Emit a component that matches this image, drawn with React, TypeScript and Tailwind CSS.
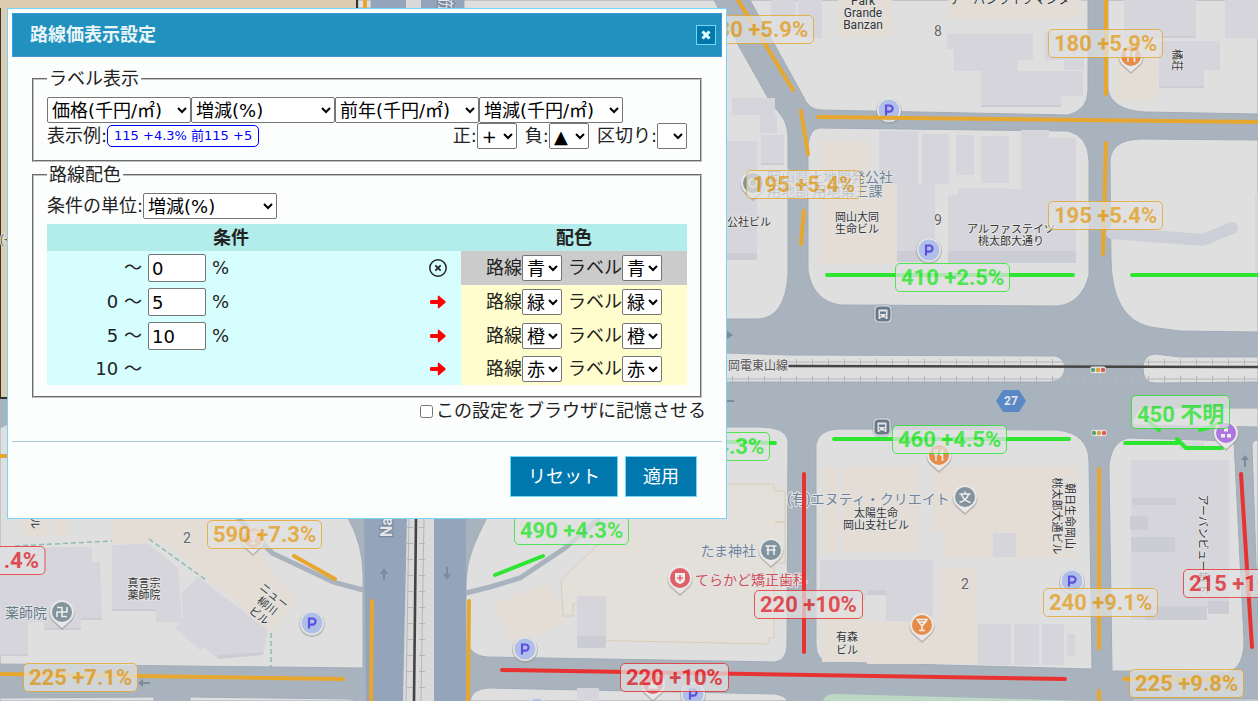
import React from "react";

const ORANGE = "#e7a72e";
const GREEN = "#2ee632";
const RED = "#e83232";
const LAND = "#dfdfdf";
const BUILDING = "#d5d5db";
const SHOP = "#e3ddd6";

const landBlocks = [
  "M358 0H371V8H358Z",
  "M464 0H714L727 25L768 98L783 118Q788 126 788 140V275Q785 318 758 319H466Z",
  "M750 0L803 96Q808 109 820 110L1068 115Q1088 110 1088 90V0Z",
  "M1108 0V90Q1112 110 1145 112L1258 114V0Z",
  "M808 145Q810 128 820 128L1068 131Q1088 136 1089 160V275Q1082 303 1058 306L840 305Q812 300 808 270Z",
  "M1110 160Q1112 140 1140 139L1258 140V332L1180 331L1150 327Q1112 318 1111 260Z",
  "M600 352L727 353L790 355L1055 356Q1064 358 1065 368Q1064 381 1050 382H600Z",
  "M1258 357H1180L1155 354Q1143 355 1143 368Q1143 383 1155 383L1258 382Z",
  "M0 428L8 424H300L348 518Q363 545 363 575V668L0 664Z",
  "M487 518C470 550 466 565 466 590V640Q470 656 487 657L775 662Q787 660 787 645L788 440Q785 427 760 427H500Z",
  "M470 701Q472 689 488 688L775 694Q786 696 787 701Z",
  "M0 698L154 697V701H0ZM190 697L350 699L358 701H190Z",
  "M816 445Q818 430 838 429L1058 430Q1089 434 1089 462L1092 669L830 662Q816 660 816 645Z",
  "M1109 465Q1112 440 1130 438L1234 441L1244 640Q1244 668 1228 672L1112 671Z",
  "M1252 446Q1252 440 1258 440V620Z",
  "M1132 422L1140 408H1258V427L1135 425Z",
  "M1133 699H1258V701H1133Z",
];

const shops = [
  "M838 0H892V37H838Z",
  "M948 0H1081V18H948Z",
  "M1117 38H1156V101H1117Z",
  "M819 141H869V183H897V263H819Z",
  "M822 468H838V554H822ZM842 466H918V553H842Z",
  "M932 466H1076V558H945V532H932Z",
  "M867 622H940V569H977V664H867ZM822 600H866V662H822Z",
  "M22 518H47V537H22ZM52 518H67V536H52ZM112 518H148V544H112Z",
  "M148 518H245L270 567L295 600L272 632L240 605L205 577L165 543L148 540Z",
  "M494 603L550 582L565 623L512 646Z",
];

const buildings = [
  "M771 0H796V35H771ZM798 0H822V38H798Z",
  "M732 98H775V115H732ZM760 115H777V133H760ZM761 135H784V165H761ZM727 141H757V260H727Z",
  "M879 131H918V184H879ZM922 134H949V184H922ZM956 135H974V175H956ZM981 136H1009V183H981Z",
  "M897 184H935V262H897ZM948 195H958V188H1009V189H1021V130H1049V138H1076V263H948Z",
  "M947 34H1033V60H1018V71H1083V96H1061V107H981V71H954V49H947Z",
  "M1045 32H1084V70H1064V60H1045Z",
  "M1124 0H1196V38H1124ZM1225 0H1258V38H1225ZM1159 41H1220V70H1204V88H1159Z",
  "M1255 195H1258V272H1255Z",
  "M820 560H933V621H886V595H866V600H820Z",
  "M993 533H1016V557H993ZM978 624H1011V665H978ZM1014 624H1039V665H1014ZM1042 624H1064V665H1042ZM1067 634H1075V656H1067Z",
  "M1131 460H1229V608H1207V620H1131ZM1180 442H1204V450H1180Z",
  "M577 596H606V648H577ZM577 688H599V701H577Z",
  "M0 548L92 547V562H100L102 620H81V630H44V622H28V656H0Z",
  "M112 545L149 544L178 568L182 622H156V611H112Z",
  "M182 593L198 577L268 630L263 655L218 659L203 647L200 650L175 628L183 617Z",
];

const shades = [
  "M727 253H757V260H727ZM897 251H935V262H897ZM948 251H1076V263H948Z",
  "M1132 498H1176V505H1132ZM1130 516H1148V530H1130ZM1131 537H1175V552H1131ZM1145 606H1207V620H1145ZM1208 601H1229V614H1208Z",
  "M577 636H606V648H577ZM867 590H886V595H867Z",
  "M112 609H156V611H112ZM81 618H102V620H81ZM44 628H81V630H44ZM0 654H28V656H0ZM218 655L264 652L263 655L218 659Z",
  "M1159 86H1204V88H1159ZM981 105H1061V107H981ZM1124 36H1195V38H1124ZM761 163H784V165H761Z",
];

const priceLines: [string, string][] = [
  [ORANGE, "M738 0L793 90M801 111L808 154M818 117L1258 122M804 211L801 244M1106 0V94M1106 143L1103 254"],
  [ORANGE, "M365 0V10M0 456H12M0 674L343 679M294 556L335 579M372 601L371 701M469 601L468 701"],
  [ORANGE, "M1099 469V648M1124 679L1235 680M1099 691V701"],
  [GREEN, "M827 275H1073M1132 275H1258M834 439H1069M700 441L775 443M495 575L543 556"],
  [GREEN, "M1125 443H1178L1177 439L1186 448H1222M1148 421L1159 430M1200 430L1216 425"],
  [RED, "M804 474V652M502 670L1065 679M1241 474L1252 647"],
];

interface PriceLabelData {
  x: number;
  y: number;
  text: string;
  tone: "orange" | "green" | "red";
  end?: boolean;
}

const priceLabels: PriceLabelData[] = [
  { x: 699, y: 15, text: "180 +5.9%", tone: "orange" },
  { x: 1048, y: 29, text: "180 +5.9%", tone: "orange" },
  { x: 746, y: 170, text: "195 +5.4%", tone: "orange" },
  { x: 1048, y: 201, text: "195 +5.4%", tone: "orange" },
  { x: 895, y: 263, text: "410 +2.5%", tone: "green" },
  { x: 892, y: 425, text: "460 +4.5%", tone: "green" },
  { x: 655, y: 432, text: "490 +4.3%", tone: "green" },
  { x: 514, y: 516, text: "490 +4.3%", tone: "green" },
  { x: 207, y: 520, text: "590 +7.3%", tone: "orange" },
  { x: 45, y: 546, text: "+11.4%", tone: "red", end: true },
  { x: 754, y: 590, text: "220 +10%", tone: "red" },
  { x: 620, y: 663, text: "220 +10%", tone: "red" },
  { x: 1043, y: 588, text: "240 +9.1%", tone: "orange" },
  { x: 23, y: 663, text: "225 +7.1%", tone: "orange" },
  { x: 1129, y: 669, text: "225 +9.8%", tone: "orange" },
  { x: 1183, y: 569, text: "215 +10%", tone: "red" },
  { x: 1131, y: 395, text: "450 不明", tone: "green" },
];

const toneClass = {
  orange: "border-[#e7a72e] text-[#e3a228]",
  green: "border-[#2ee632] text-[#2ee632]",
  red: "border-[#e83232] text-[#e02c32]",
};

function PriceLabel({ x, y, text, tone, end }: PriceLabelData) {
  const tall = text.includes("不明");
  return (
    <span
      className={`absolute rounded-[5px] border bg-[#e2e2e2]/90 px-[5px] font-[Roboto,'Noto_Sans_CJK_JP',sans-serif] text-[22px] leading-[27px] font-bold whitespace-nowrap opacity-80 ${tall ? "pt-[5px]" : ""} ${toneClass[tone]}`}
      style={{ left: x, top: y, transform: end ? "translateX(-100%)" : undefined }}
    >
      {text}
    </span>
  );
}

function MapText({
  x,
  y,
  children,
  size = 12,
  fill = "#333",
  rotate,
  anchor = "middle",
}: {
  x: number;
  y: number;
  children: string;
  size?: number;
  fill?: string;
  rotate?: number;
  anchor?: "start" | "middle" | "end";
}) {
  return (
    <text
      x={x}
      y={y}
      fontSize={size}
      fill={fill}
      textAnchor={anchor}
      dominantBaseline="central"
      stroke="#e4e4e4"
      strokeWidth="2"
      strokeLinejoin="round"
      paintOrder="stroke"
      transform={rotate ? `rotate(${rotate} ${x} ${y})` : undefined}
    >
      {children}
    </text>
  );
}

function Parking({ x, y }: { x: number; y: number }) {
  return (
    <g>
      <circle cx={x} cy={y + 1} r="13" fill="#999" opacity="0.5" />
      <circle cx={x} cy={y} r="12" fill="#e6e6e6" />
      <circle cx={x} cy={y} r="10.5" fill="#b0bfe8" />
      <path d={`M${x - 3} ${y + 5.5}V${y - 4.5}H${x + 0.5}A3 3 0 0 1 ${x + 0.5} ${y + 1.7}H${x - 2}`} fill="none" stroke="#5d50e0" strokeWidth="2.2" />
    </g>
  );
}

function Pin({ x, y, color, children }: { x: number; y: number; color: string; children?: React.ReactNode }) {
  return (
    <g transform={`translate(${x} ${y})`}>
      <path d="M0 17L-9 9A12.5 12.5 0 1 1 9 9Z" fill="#8b8b8b" opacity="0.5" transform="translate(0 1)" />
      <path d="M0 16L-8.500 8.500A12 12 0 1 1 8.500 8.500Z" fill="#e8e8e8" />
      <circle r="10" fill={color} />
      <g fill="none" stroke="#eee" strokeWidth="1.6">{children}</g>
    </g>
  );
}

function Bus({ x, y }: { x: number; y: number }) {
  return (
    <g transform={`translate(${x} ${y})`}>
      <rect x="-9" y="-9" width="18" height="18" rx="5" fill="#e4e4e4" stroke="#8c959f" strokeWidth="0.6" />
      <rect x="-7.500" y="-7.500" width="15" height="15" rx="4" fill="#66788a" />
      <path d="M-4.500 -4.500H4.500V5H2.500V3.500H-2.500V5H-4.500Z" fill="#e6e6e6" />
      <path d="M-3 -2.500H3V0H-3Z" fill="#66788a" />
      <circle cx="-2.500" cy="1.800" r="0.800" fill="#66788a" />
      <circle cx="2.500" cy="1.800" r="0.800" fill="#66788a" />
    </g>
  );
}

function Signal({ x, y }: { x: number; y: number }) {
  return (
    <g>
      <rect x={x - 8} y={y - 3.5} width="16" height="7" rx="2.500" fill="#e6e6e6" stroke="#a8a8a8" strokeWidth="0.5" />
      <circle cx={x - 5} cy={y} r="2.200" fill="#58a377" />
      <circle cx={x} cy={y} r="2.200" fill="#e0a23a" />
      <circle cx={x + 5} cy={y} r="2.200" fill="#dc5a55" />
    </g>
  );
}

function Fork() {
  return (
    <>
      <path d="M-4.500 -5.500V-1.500Q-4.500 0 -3 0Q-1.500 0 -1.500 -1.500V-5.500M-3 -5.500V6" strokeWidth="1.3" />
      <path d="M3.500 6V-5Q1.500 -4 1.500 0H3.500" fill="#eee" />
    </>
  );
}

function Cocktail() {
  return (
    <>
      <path d="M-5 -5.500H5L1 0H-1Z" strokeWidth="1.4" />
      <path d="M-3.500 -3H3.500L0 0.500V5.500M-3 5.500H3" />
    </>
  );
}

function CityMap() {
  return (
    <svg
      className="absolute top-0 left-0 font-[Roboto,'Noto_Sans_CJK_JP',sans-serif]"
      width="1258"
      height="701"
      viewBox="0 0 1258 701"
      aria-label="地図"
    >
      <rect width="1258" height="701" fill="#a9b3be" />
      <g fill={LAND} stroke="#a2adb9" strokeWidth="1">
        {landBlocks.map((d) => <path key={d} d={d} />)}
      </g>
      <path d="M823 701Q825 694 835 694L1088 701Z" fill="#bcd8c5" />
      <path d="M371 0H406V8H371ZM421 0H464V8H421ZM364 518H407L403 701H366ZM434 518H466V701H434Z" fill="#94a5bb" />
      <path d="M406 0H421V8H406ZM407 518H434V701H403Z" fill="#dadada" />
      <path d="M357 0H0V398H357Z" fill="#ddcdb0" stroke="#333" strokeWidth="2" />
      <path d="M0 0H356V8H0Z" fill="#ddcdb0" />
      <path d="M630 515L564 577L561 581L563 616H573V604H578V640L769 644V638H774V563H785V522H775V522H785V491H774V484H720Z" fill="#e3e0d9" stroke="#d9cdb4" strokeWidth="1" />
      {shops.map((d) => <path key={d} d={d} fill={SHOP} />)}
      {buildings.map((d) => <path key={d} d={d} fill={BUILDING} />)}
      {shades.map((d) => <path key={d} d={d} fill="#cccdd4" />)}
      <path d="M1112 233L1203 240L1232 228" fill="none" stroke="#cdcfd8" strokeWidth="12" strokeLinecap="round" strokeLinejoin="round" />
      <path d="M238 518L272 553L333 582L363 590M466 593L490 587L520 578L565 548L600 518" fill="none" stroke="#a9b3be" strokeWidth="5" />
      <path d="M15 546L112 541M149 539L206 580M271 633V668" fill="none" stroke="#8fbcae" strokeWidth="1.500" strokeDasharray="5 3" />

      <path d="M600 362H1258M600 379H1258" stroke="#b4b6b9" strokeWidth="1" />
      <path d="M604 362H1258M604 379H1258" stroke="#b4b6b9" strokeWidth="6" strokeDasharray="1 15" />
      <path d="M409 518L406 701M424 518L421 701" stroke="#b4b6b9" strokeWidth="1" />
      <path d="M410 527V701M422 527V701" stroke="#b4b6b9" strokeWidth="6" strokeDasharray="1 15" />
      <path d="M788 366L1258 367M416 518L414 701" stroke="#444" strokeWidth="2.600" />
      <path d="M384 580V571M447 567V577M150 683H140M734 401H727M1245 467V457" stroke="#7e8b98" strokeWidth="2" />
      <path d="M380 574L384 568L388 574ZM443 574L447 580L451 574ZM143 679L138 683L143 687ZM727 331L733 335L727 339ZM1241 460L1245 455L1249 460Z" fill="#7e8b98" />

      <MapText x={863} y={1}>Park</MapText>
      <MapText x={863} y={13}>Grande</MapText>
      <MapText x={863} y={25}>Banzan</MapText>
      <MapText x={1010} y={0}>アーバンライフマンタ</MapText>
      <MapText x={938} y={31} size={14} fill="#666">8</MapText>
      <MapText x={938} y={220} size={14} fill="#666">9</MapText>
      <MapText x={965} y={584} size={14} fill="#666">2</MapText>
      <MapText x={187} y={538} size={14} fill="#666">2</MapText>
      <MapText x={857} y={217} size={11}>岡山大同</MapText>
      <MapText x={857} y={229} size={11}>生命ビル</MapText>
      <MapText x={1011} y={229} size={11}>アルファステイツ</MapText>
      <MapText x={1011} y={241} size={11}>桃太郎大通り</MapText>
      <MapText x={771} y={222} size={11} anchor="end">公社ビル</MapText>
      <MapText x={767} y={177} size={14} fill="#71849a" anchor="start">岡山県土地開発公社</MapText>
      <MapText x={767} y={191} size={14} fill="#71849a" anchor="start">用地部 用地第三課</MapText>
      <MapText x={728} y={366} fill="#555" anchor="start">岡電東山線</MapText>
      <MapText x={787} y={499} size={14} fill="#71849a" anchor="start">(有)エヌティ・クリエイト</MapText>
      <MapText x={876} y={513} size={11}>太陽生命</MapText>
      <MapText x={876} y={525} size={11}>岡山支社ビル</MapText>
      <MapText x={847} y={637} size={11}>有森</MapText>
      <MapText x={847} y={650} size={11}>ビル</MapText>
      <MapText x={756} y={551} size={14} fill="#71849a" anchor="end">たま神社</MapText>
      <MapText x={695} y={580} size={14} fill="#d0505c" anchor="start">てらかど矯正歯科</MapText>
      <MapText x={144} y={583} size={11}>真言宗</MapText>
      <MapText x={144} y={595} size={11}>薬師院</MapText>
      <MapText x={5} y={613} size={14} fill="#66798c" anchor="start">薬師院</MapText>
      <MapText x={274} y={596} size={11} rotate={38}>ニュー</MapText>
      <MapText x={267} y={606} size={11} rotate={38}>柳川</MapText>
      <MapText x={259} y={616} size={11} rotate={38}>ビル</MapText>
      <MapText x={34} y={518} size={11} rotate={90}>ビル</MapText>
      <MapText x={1069} y={516} size={11} rotate={90}>朝日生命岡山</MapText>
      <MapText x={1056} y={516} size={11} rotate={90}>桃太郎大通ビル</MapText>
      <MapText x={1202} y={544} size={11} rotate={90}>アーバンビュー城下</MapText>
      <MapText x={1176} y={60} size={11} rotate={90}>橘荘</MapText>
      <MapText x={0} y={240} fill="#885a2c" anchor="start">(+</MapText>
      <text x="386" y="537" fontSize="16" fill="#e6e6e6" stroke="#7888a4" strokeWidth="2.500" paintOrder="stroke" fontWeight="700" transform="rotate(-90 386 537)" dominantBaseline="central">Nakasando</text>
      <text x="445" y="10" fontSize="16" fill="#e6e6e6" stroke="#7888a4" strokeWidth="2.500" paintOrder="stroke" transform="rotate(90 445 10)" textAnchor="end" dominantBaseline="central">筋</text>

      <path d="M996 401L1003 390H1019L1026 401L1019 412H1003Z" fill="#5988c4" />
      <text x="1011" y="401" fontSize="12" fontWeight="700" fill="#e4e8ef" textAnchor="middle" dominantBaseline="central">27</text>

      <Parking x={889} y={110} />
      <Parking x={929} y={250} />
      <Parking x={312} y={623} />
      <Parking x={525} y={649} />
      <Parking x={693} y={694} />
      <Parking x={537} y={709} />
      <Parking x={1072} y={581} />
      <Bus x={883} y={314} />
      <Bus x={882} y={427} />
      <Signal x={1098} y={370} />
      <Signal x={1099} y={433} />

      <Pin x={1131} y={56} color="#e78b48"><Fork /></Pin>
      <Pin x={939} y={455} color="#e78b48"><Fork /></Pin>
      <Pin x={922} y={625} color="#e78b48"><Cocktail /></Pin>
      <Pin x={253} y={538} color="#e9a06e"><Cocktail /></Pin>
      <Pin x={965} y={497} color="#82939d">
        <path d="M-5.500 -3H5.500M0 -5.500V-3M-3.500 -2.500Q-1 4 5.500 5.500M3.500 -2.500Q1 4 -5.500 5.500" />
      </Pin>
      <Pin x={771} y={550} color="#82939d">
        <path d="M-5.500 -4H5.500M-4.500 0H4.500M-3 -4V5M3 -4V5" />
      </Pin>
      <Pin x={62} y={612} color="#82939d">
        <path d="M-5 -4.500H0V4.500H5M5 -5V0H-5V5" />
      </Pin>
      <Pin x={753} y={183} color="#82939d"><circle r="4" /></Pin>
      <Pin x={680} y={578} color="#e0606a">
        <path d="M-5 -5H5V1Q5 4.500 0 6Q-5 4.500 -5 1Z" fill="#eee" stroke="none" />
        <path d="M0 -3V3M-3 0H3" stroke="#e0606a" />
      </Pin>
      <Pin x={653} y={684} color="#e0606a"><path d="M0 -4L4 4H-4Z" fill="#eee" /></Pin>

      {priceLines.map(([color, d]) => (
        <path key={d} d={d} fill="none" stroke={color} strokeWidth="4" strokeLinecap="round" strokeLinejoin="round" />
      ))}

      <Pin x={1226} y={433} color="#af76e2">
        <path d="M-2 -5H2V-1.500H-2ZM-5 1H-1V4.500H-5ZM1 1H5V4.500H1Z" fill="#eee" stroke="none" />
      </Pin>
    </svg>
  );
}

const selectClass = "h-[26px] rounded-[2px] border border-[#767676] bg-white text-black";
const fieldsetClass = "min-w-0 border-2 border-[#c0c0c0] px-[13px] pt-[5px] pb-[11px] [border-style:groove]";

function Picker({ label, value, options, width }: { label: string; value: string; options: string[]; width: string }) {
  return (
    <select aria-label={label} defaultValue={value} className={`${selectClass} ${width}`}>
      {options.map((o) => <option key={o}>{o}</option>)}
    </select>
  );
}

const units = ["価格(千円/㎡)", "増減(%)", "前年(千円/㎡)", "増減(千円/㎡)"];
const colors = ["青", "緑", "橙", "赤"];

const rules = [
  { from: "", to: "0", color: "青", active: false },
  { from: "0", to: "5", color: "緑", active: true },
  { from: "5", to: "10", color: "橙", active: true },
  { from: "10", to: null, color: "赤", active: true },
];

function RuleIcon({ active }: { active: boolean }) {
  return active ? (
    <svg width="18" height="18" viewBox="0 0 18 18" className="block">
      <path d="M2.500 7H8.800V3.300Q9 2.200 9.900 2.700L16.400 8.300Q17 9 16.400 9.700L9.900 15.300Q9 15.800 8.800 14.700V11H2.500Q1 11 1 9.700V8.300Q1 7 2.500 7Z" fill="#f00" />
    </svg>
  ) : (
    <svg width="18" height="18" viewBox="0 0 18 18" className="block" fill="none" stroke="#222">
      <circle cx="9" cy="9" r="8.200" strokeWidth="1.500" />
      <path d="M6.300 6.300L11.700 11.700M11.700 6.300L6.300 11.700" strokeWidth="1.800" />
    </svg>
  );
}

function SettingsDialog() {
  return (
    <div
      role="dialog"
      aria-labelledby="dialog-title"
      className="relative w-[720px] max-w-full border border-[#77d5f7] bg-[#fcfdfd] p-1 pb-[21px] font-['DejaVu_Sans','Noto_Sans_CJK_JP',sans-serif] text-lg leading-[26px] text-[#222]"
    >
      <header className="flex h-11 items-center justify-between border border-[#4297d7] bg-[#2191c0] pr-[5px] pl-[17px]">
        <h1 id="dialog-title" className="font-bold text-[#eaf5f7]">路線価表示設定</h1>
        <button type="button" aria-label="閉じる" className="flex size-5 items-center justify-center border border-[#77d5f7] bg-[#0078ae]">
          <svg width="10" height="10" viewBox="0 0 10 10" className="block">
            <path d="M1.500 1.500L8.500 8.500M8.500 1.500L1.500 8.500" stroke="#e0fdff" strokeWidth="3" />
          </svg>
        </button>
      </header>

      <form className="pt-[9px]">
        <div className="px-5">
          <fieldset className={fieldsetClass}>
            <legend className="px-0.5">ラベル表示</legend>
            <div className="flex">
              {units.map((u, i) => (
                <Picker key={u} label={`項目${i + 1}`} value={u} options={units} width="w-36" />
              ))}
            </div>
            <div className="flex items-center justify-between">
              <div className="flex items-center">
                表示例:
                <span className="rounded-[5px] border border-[#00f] bg-white px-1.5 text-[13px] leading-5 text-[#00f]">
                  115 +4.3% 前115 +5
                </span>
              </div>
              <div className="flex items-center gap-2">
                <label className="flex">正:<Picker label="正" value="+" options={["+", "△"]} width="w-10" /></label>
                <label className="flex">負:<Picker label="負" value="▲" options={["▲", "-"]} width="w-10" /></label>
                <label className="flex">区切り:<Picker label="区切り" value=" " options={[" ", "/"]} width="w-[30px]" /></label>
              </div>
            </div>
          </fieldset>

          <fieldset className={fieldsetClass}>
            <legend className="px-0.5">路線配色</legend>
            <label className="flex">
              条件の単位:
              <Picker label="条件の単位" value="増減(%)" options={units} width="w-[134px]" />
            </label>
            <table className="mt-[5px] w-full table-fixed border-collapse">
              <colgroup>
                <col className="w-[98px]" />
                <col />
                <col className="w-[46px]" />
                <col className="w-[226px]" />
              </colgroup>
              <thead>
                <tr className="h-[27px] bg-[#b3edeb]">
                  <th colSpan={2}>条件</th>
                  <td />
                  <th>配色</th>
                </tr>
              </thead>
              <tbody>
                {rules.map((r) => (
                  <tr key={r.color} className="bg-[#d6fefe]">
                    <td className="py-[3px] pr-[3px] text-right whitespace-pre">{r.from} 〜</td>
                    <td className="py-[3px]">
                      {r.to !== null && (
                        <label className="flex items-center gap-1.5 pl-[3px]">
                          <input
                            aria-label={`${r.color}の上限`}
                            defaultValue={r.to}
                            className="h-7 w-[58px] rounded-[2px] border border-[#767676] bg-white px-[3px] text-black"
                          />
                          %
                        </label>
                      )}
                    </td>
                    <td className="py-[3px] pl-3.5"><RuleIcon active={r.active} /></td>
                    <td className={`py-[3px] ${r.active ? "bg-[#fffdcd]" : "bg-[#cbcbcb]"}`}>
                      <div className="flex justify-center gap-1.5">
                        <label className="flex">路線<Picker label="路線" value={r.color} options={colors} width="w-10" /></label>
                        <label className="flex">ラベル<Picker label="ラベル" value={r.color} options={colors} width="w-10" /></label>
                      </div>
                    </td>
                  </tr>
                ))}
              </tbody>
            </table>
          </fieldset>
        </div>

        <label className="flex items-center justify-end gap-[3px] pr-4">
          <input type="checkbox" className="size-[13px]" />
          この設定をブラウザに記憶させる
        </label>

        <div className="mt-[17px] flex justify-end gap-[7px] border-t border-[#a6c9e2] pt-3.5 pr-[25px]">
          <button type="reset" className="h-[41px] w-[108px] border border-[#77d5f7] bg-[#0078ae] text-white">リセット</button>
          <button type="button" className="h-[41px] w-[72px] border border-[#77d5f7] bg-[#0078ae] text-white">適用</button>
        </div>
      </form>
    </div>
  );
}

export default function App() {
  return (
    <main className="relative h-screen w-full overflow-hidden bg-[#a9b3be] pt-2 pl-[7px]">
      <CityMap />
      {priceLabels.map((l) => <PriceLabel key={`${l.x}-${l.y}`} {...l} />)}
      <SettingsDialog />
    </main>
  );
}
